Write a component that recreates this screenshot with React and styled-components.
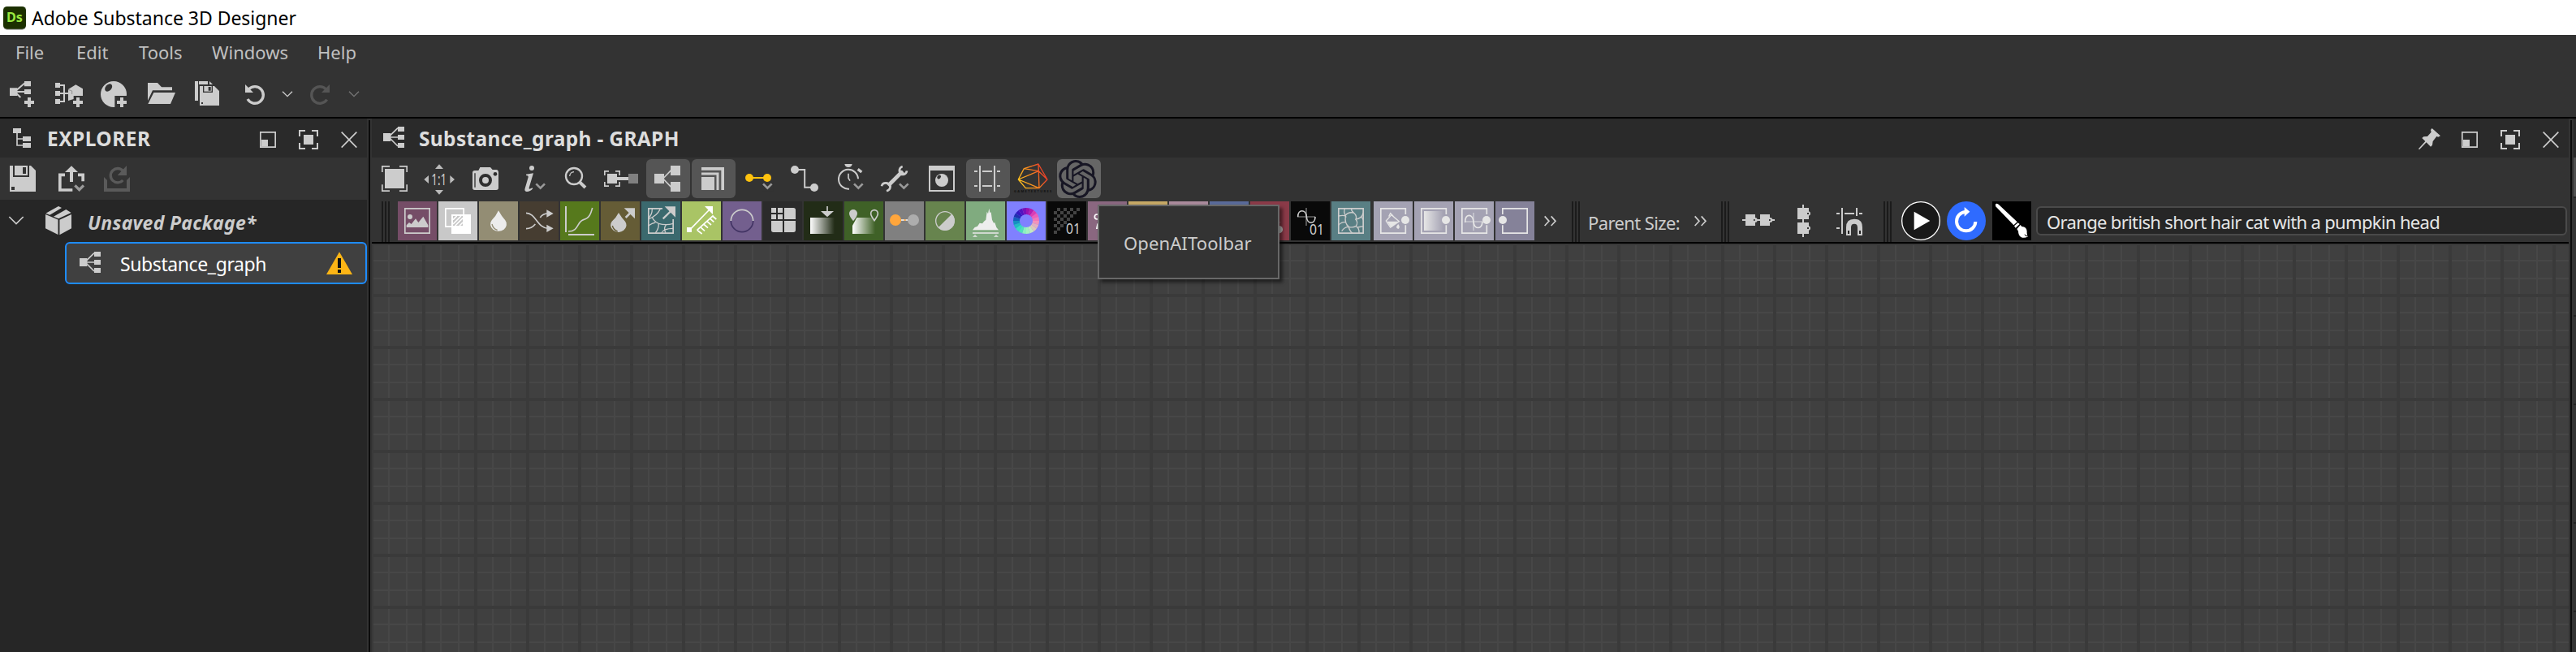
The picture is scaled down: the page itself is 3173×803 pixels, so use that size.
import React from 'react';
import styled, { createGlobalStyle } from 'styled-components';
import { SiOpenai } from 'react-icons/si';

const INK = '#cccccc';
const BG = '#333333';

const GlobalStyle = createGlobalStyle`
  * { box-sizing: border-box; }
  body { margin: 0; background: ${BG}; overflow: hidden; }
  svg { display: block; flex: none; }
`;

const Window = styled.div`
  display: flex;
  flex-direction: column;
  width: 3173px;
  height: 803px;
  overflow: hidden;
  background: ${BG};
  color: ${INK};
  font-family: 'Noto Sans', 'Open Sans', sans-serif;
  font-size: 22px;
  white-space: nowrap;
`;

const TitleBar = styled.header`
  display: flex;
  align-items: center;
  gap: 6px;
  height: 43px;
  padding-left: 4px;
  background: #ffffff;
`;

const Label = styled.span`
  padding-top: ${(p) => p.$drop || 0}px;
  font-size: ${(p) => p.$size || 22}px;
  line-height: 30px;
  font-weight: ${(p) => p.$weight || 400};
  font-style: ${(p) => (p.$italic ? 'italic' : 'normal')};
  letter-spacing: ${(p) => p.$track || 0}px;
  color: ${(p) => p.$color || INK};
`;

const MenuBar = styled.nav`
  display: flex;
  align-items: center;
  height: 42px;
  padding-left: 19px;
`;

const MenuItem = styled.div`
  width: ${(p) => p.$width}px;
  color: #c0c0c0;
  line-height: 30px;
`;

const MainToolbar = styled.div`
  display: flex;
  align-items: center;
  height: 59px;
  padding-top: 3px;
`;

const Body = styled.main`
  display: flex;
  height: 659px;
  border-top: 2px solid #000000;
`;

const Explorer = styled.aside`
  display: flex;
  flex-direction: column;
  width: 452px;
  background: #262626;
`;

const PanelHeader = styled.div`
  display: flex;
  align-items: center;
  height: 48px;
  background: #2a2a2a;
`;

const PanelTitle = styled.div`
  display: flex;
  align-items: center;
  flex: 1;
`;

const Controls = styled.div`
  display: flex;
  gap: 6px;
`;

const Toolbar = styled.div`
  display: flex;
  align-items: center;
  height: 52px;
  padding-left: ${(p) => p.$inset || 0}px;
  background: ${BG};
`;

const Splitter = styled.div`
  width: 6px;
  margin-top: 2px;
  background: #0c0c0c;
  border-left: 2px solid ${BG};
  border-right: 2px solid ${BG};
`;

const TreeRow = styled.div`
  display: flex;
  align-items: center;
  height: 52px;
`;

const SelectedRow = styled.div`
  display: flex;
  align-items: center;
  justify-content: space-between;
  height: 52px;
  margin-left: 80px;
  border: 2px solid #1e8cff;
  border-radius: 6px;
  background: #404040;
`;

const RowName = styled.div`
  display: flex;
  align-items: center;
`;

const Graph = styled.section`
  position: relative;
  display: flex;
  flex-direction: column;
  width: 2706px;
`;

const ToolButton = styled.div`
  width: 54px;
  height: 48px;
  margin-right: ${(p) => p.$after || 2}px;
  border-radius: 6px;
  overflow: hidden;
  background: ${(p) => p.$bg || 'transparent'};
`;

const LogoButton = styled(ToolButton)`
  display: flex;
  align-items: center;
  justify-content: center;
  padding-right: 3px;
`;

const NodeBar = styled.div`
  display: flex;
  align-items: flex-start;
  height: 54px;
  padding: 2px 2px 0 12px;
  border-bottom: 2px solid #000000;
  background: ${BG};
`;

const Grip = styled.div`
  width: 10px;
  height: 50px;
  margin-right: ${(p) => p.$after || 0}px;
  background: repeating-linear-gradient(90deg, #1b1b1b 0 2px, transparent 2px 4px);
`;

const Tile = styled.div`
  width: 48px;
  height: 48px;
  margin-right: ${(p) => p.$after || 2}px;
  background: ${(p) => p.$bg};
`;

const SizeLabel = styled.div`
  display: flex;
  align-items: center;
  width: 127px;
  height: 48px;
  padding-top: 3px;
`;

const RoundButton = styled.div`
  width: 48px;
  height: 48px;
  margin-right: 8px;
`;

const GripSpace = styled.div`
  width: 14px;
`;

const PromptInput = styled.div`
  flex: 1;
  display: flex;
  align-items: center;
  height: 36px;
  margin: 6px 0 0 -2px;
  padding-left: 11px;
  border: 2px solid #4a4a4a;
  border-radius: 6px;
  background: #262626;
`;

const Canvas = styled.div`
  flex: 1;
  background-color: #404040;
  background-image:
    linear-gradient(90deg, #3a3a3a 4px, transparent 4px),
    linear-gradient(180deg, #3a3a3a 4px, transparent 4px),
    linear-gradient(90deg, transparent 22px, #474747 22px 24px, transparent 24px 44px, #474747 44px 46px, transparent 46px),
    linear-gradient(180deg, transparent 22px, #474747 22px 24px, transparent 24px 44px, #474747 44px 46px, transparent 46px);
  background-size: 64px 64px;
  background-position: -2px -2px;
`;

const Tooltip = styled.div`
  position: absolute;
  left: 894px;
  top: 106px;
  width: 224px;
  height: 92px;
  display: flex;
  align-items: center;
  padding-left: 30px;
  border: 2px solid #686868;
  background: ${BG};
  box-shadow: 4px 4px 4px rgba(0, 0, 0, 0.5);
`;

const NextPanel = styled.div`
  display: flex;
  flex-direction: column;
  width: 3px;
`;

const NextPanelPart = styled.div`
  height: ${(p) => p.$h}px;
  background: ${(p) => p.$bg};
`;

/* Icons are drawn on a grid of three units per pixel. */
const Glyph = ({ x, y, w, h, children }) => (
  <svg width={w} height={h} viewBox={`${x} ${y} ${w * 3} ${h * 3}`} fill={INK} stroke="none">
    {children}
  </svg>
);

const Line = ({ d, w = 5, c = INK, ...rest }) => (
  <path d={d} fill="none" stroke={c} strokeWidth={w} {...rest} />
);

const Plus = ({ x, y }) => (
  <path d={`M${x - 6} ${y - 18}h12v12h12v12h-12v12h-12v-12h-12v-12h12z`} />
);

const Chevron = ({ x, y, c = '#999999', w = 8, r = 16 }) => (
  <Line d={`M${x - r} ${y - r / 2}l${r} ${r}l${r} ${-r}`} w={w} c={c} />
);

const GraphMark = ({ x, y }) => (
  <g transform={`translate(${x} ${y})`}>
    <path d="M0 24h28v30h-28zM54 0h24v18h-24zM54 30h24v18h-24zM54 60h24v18h-24z" />
    <Line d="M24 34L54 5M24 39H54M24 42L54 72" w={5} />
  </g>
);

const WindowControls = () => (
  <Controls>
    <Glyph x={924} y={24} w={44} h={44}>
      <Line d="M962.5 68.5h55v55h-55z" />
      <path d="M966 96h24v26h-24z" />
    </Glyph>
    <Glyph x={1074} y={24} w={44} h={44}>
      <Line d="M1107 84V63H1128M1152 63H1173V84M1173 108V129H1152M1128 129H1107V108" w={6} />
      <path d="M1122 78h36v36h-36z" />
    </Glyph>
    <Glyph x={1224} y={24} w={44} h={44}>
      <Line d="M1262 68L1318 125M1318 68L1262 125" w={5} />
    </Glyph>
  </Controls>
);

const MainIcons = () => (
  <>
    <Glyph x={0} y={276} w={56} h={48}>
      <path d="M36 325h28v29h-28zM90 300h24v19h-24zM90 330h24v18h-24z" />
      <Line d="M60 334L93 306M60 339H92M60 344L76 360" w={6} />
      <Plus x={108} y={378} />
    </Glyph>
    <Glyph x={168} y={276} w={56} h={48}>
      <path d="M204 306h18v18h-18zM204 336h18v18h-18zM204 366h18v18h-18z" />
      <Line d="M220 315H237V375H220M220 345H255" w={6} />
      <path d="M252 330L280 313L306 328V354H272V366L252 372Z" />
      <Line d="M252 331L266 336V348" w={2} c="#777" />
      <Plus x={288} y={378} />
    </Glyph>
    <Glyph x={336} y={276} w={56} h={48}>
      <circle cx="420" cy="348" r="48" />
      <path d="M424 354h50v50h-50z" fill={BG} />
      <ellipse cx="401" cy="324" rx="16" ry="11" transform="rotate(-48 401 324)" fill={BG} />
      <Plus x={450} y={378} />
    </Glyph>
    <Glyph x={504} y={276} w={56} h={48}>
      <path d="M546 306H582L597 322H636V334H564L546 372ZM568 342H648L630 384H547Z" />
    </Glyph>
    <Glyph x={672} y={276} w={56} h={48}>
      <path d="M720 300h12v72h-12zM735 300h33v12h-33zM738 318h54l18 18v54h-72z" />
      <path d="M774 300l12 12h-12z" />
      <path d="M750 318h36v24h-36z" fill={BG} />
      <path d="M754 318h28v20h-28z" />
      <path d="M770 321h9v14h-9zM744 378h6v6h-6z" fill={BG} />
    </Glyph>
    <Glyph x={840} y={276} w={56} h={48}>
      <Line d="M919 330A31 31 0 1 1 915 366" w={10} />
      <path d="M906 312V342H936Z" />
    </Glyph>
    <Glyph x={1008} y={276} w={30} h={48}>
      <Chevron x={1062} y={347} w={4} c={INK} r={18} />
    </Glyph>
    <Glyph x={1098} y={276} w={56} h={48}>
      <Line d="M1205 330A31 31 0 1 0 1208 368" w={10} c="#555555" />
      <path d="M1218 312V342H1188Z" fill="#555555" />
    </Glyph>
    <Glyph x={1266} y={276} w={30} h={48}>
      <Chevron x={1308} y={347} w={4} c="#777777" r={18} />
    </Glyph>
  </>
);

const GraphTools = () => (
  <>
    <ToolButton>
      <Glyph x={30} y={168} w={54} h={48}>
        <Line d="M62.500 216V194.500H90M126 194.500H153.500V216M153.500 262V285.500H126M90 285.500H62.500V262" />
        <path d="M72 204h72v72h-72z" />
      </Glyph>
    </ToolButton>
    <ToolButton>
      <Glyph x={198} y={168} w={54} h={48}>
        <path d="M258 204l15-17l15 17zM258 282l15 17l15-17zM234 228l-17 15l17 15zM313 228l17 15l-17 15z" fill="#bbb" />
        <text x="272" y="264" fontSize="58" textAnchor="middle" textLength="56" lengthAdjust="spacingAndGlyphs">1:1</text>
      </Glyph>
    </ToolButton>
    <ToolButton>
      <Glyph x={366} y={168} w={54} h={48}>
        <path d="M404 210H418L424 198H462L470 207H484Q492 208 492 218V274Q492 282 484 282H404Q396 282 396 274V218Q396 210 404 210Z" />
        <circle cx="444" cy="246" r="18" fill={INK} stroke="#2f2f2f" strokeWidth="12" />
        <circle cx="480" cy="223" r="7" fill="#2f2f2f" />
        <Line d="M405 220V272" w={4} c="#2f2f2f" />
      </Glyph>
    </ToolButton>
    <ToolButton>
      <Glyph x={534} y={168} w={54} h={48}>
        <circle cx="615" cy="201" r="9" />
        <path d="M594 224L621 220L605 274Q603 282 617 274L619 277Q607 290 595 288Q587 287 590 276L602 235Q603 228 594 228Z" />
        <Chevron x={647} y={267} />
      </Glyph>
    </ToolButton>
    <ToolButton>
      <Glyph x={702} y={168} w={54} h={48}>
        <circle cx="771" cy="231" r="30" fill="none" stroke={INK} strokeWidth="7" />
        <Line d="M790 251L813 273" w={12} />
        <Line d="M755 231A17 17 0 0 1 771 215" w={4} />
      </Glyph>
    </ToolButton>
    <ToolButton>
      <Glyph x={870} y={168} w={54} h={48}>
        <Line d="M884.500 228V212.500H900M924 212.500H939.500V228M939.500 252V267.500H924M900 267.500H884.500V252" />
        <path d="M894 222h36v36h-36zM930 234h42v12h-42z" />
        <path d="M972 222h36v36h-36z" fill="#808080" />
      </Glyph>
    </ToolButton>
    <ToolButton $bg="#555555">
      <Glyph x={1038} y={168} w={54} h={48}>
        <path d="M1068 222h36v36h-36zM1128 192h36v36h-36zM1128 252h36v36h-36z" />
        <Line d="M1100 240L1130 209M1100 240L1130 271" w={5} />
      </Glyph>
    </ToolButton>
    <ToolButton $bg="#555555">
      <Glyph x={1206} y={168} w={54} h={48}>
        <path d="M1242 234h48v48h-48z" />
        <Line d="M1242 222H1302V282" w={9} />
        <Line d="M1242 203.500H1320.500V282" w={11} />
      </Glyph>
    </ToolButton>
    <ToolButton>
      <Glyph x={24} y={168} w={54} h={48}>
        <circle cx="69" cy="237" r="15" fill="#ffc20e" />
        <circle cx="135" cy="237" r="15" fill="#ffc20e" />
        <path d="M69 234h66v6h-66z" fill="#ffc20e" />
        <path d="M114 249L136 266L158 249V286H114Z" fill={BG} />
        <Chevron x={136} y={267} />
      </Glyph>
    </ToolButton>
    <ToolButton>
      <Glyph x={192} y={168} w={54} h={48}>
        <circle cx="237" cy="207" r="15" />
        <circle cx="309" cy="273" r="15" />
        <Line d="M237 207H273.500V272H309" w={6} />
      </Glyph>
    </ToolButton>
    <ToolButton>
      <Glyph x={360} y={168} w={54} h={48}>
        <Line d="M438 278A36 36 0 1 1 471 241" w={6} />
        <path d="M421 186h28q-2 12-14 12t-14-12z" />
        <Line d="M470 205L484 216" w={10} />
        <Line d="M435 221V238L441 248" w={5} />
        <Chevron x={472} y={267} />
      </Glyph>
    </ToolButton>
    <ToolButton>
      <Glyph x={528} y={168} w={54} h={48}>
        <Line d="M584 264L630 218" w={14} />
        <Line d="M635 195Q622 200 624 214T641 224Q650 220 651 211M558 268Q560 256 573 256T590 268Q590 282 576 286" w={8} />
        <path d="M620 208l8 18l18-2l-12-14zM570 254l20 20l-2-18z" />
        <Chevron x={640} y={267} />
      </Glyph>
    </ToolButton>
    <ToolButton $after={4}>
      <Glyph x={696} y={168} w={54} h={48}>
        <Line d="M735 195h90v90h-90z" w={6} />
        <path d="M732 192h96v18h-96z" />
        <circle cx="780" cy="246" r="24" />
        <ellipse cx="770" cy="234" rx="8" ry="6" transform="rotate(-45 770 234)" fill={BG} />
      </Glyph>
    </ToolButton>
    <ToolButton $bg="#555555">
      <Glyph x={870} y={168} w={54} h={48}>
        <Line d="M921 192V288M975 192V288" w={6} />
        <Line d="M900 213H912M930 213H966M984 213H996M900 267H912M930 267H966M984 267H996" w={6} />
      </Glyph>
    </ToolButton>
    <ToolButton>
      <Glyph x={1038} y={168} w={54} h={48}>
        <defs>
          <linearGradient id="gt" gradientUnits="userSpaceOnUse" x1="1063" y1="260" x2="1165" y2="215">
            <stop offset="0" stopColor="#ffc81e" />
            <stop offset="0.550" stopColor="#f58220" />
            <stop offset="1" stopColor="#e8342a" />
          </linearGradient>
        </defs>
        <path
          d="M1084 203L1137 186L1170 243L1140 275H1090L1063 243ZM1084 203L1138 212L1170 243M1137 186L1138 212L1140 275L1063 243L1138 212"
          fill="none"
          stroke="url(#gt)"
          strokeWidth="4"
          strokeLinejoin="round"
        />
        <text x="1047" y="291" fontSize="12" fontWeight="700" fill="#111111" textLength="139">GAMETEXTURES</text>
      </Glyph>
    </ToolButton>
    <LogoButton $bg="#666666">
      <SiOpenai size={47} color="#171624" />
    </LogoButton>
  </>
);

const WHEEL = [
  '#9a12b0', '#b81cb0', '#dc3cb4', '#f05cb8', '#f278ba', '#f094bc', '#e4b0c0', '#dcc8bc', '#c4e8c0', '#a4f0c0',
  '#8cf0c0', '#50e0bc', '#34dcc4', '#20bcc0', '#1490c0', '#1460bc', '#2030b0', '#3418c0', '#5412c0', '#7810b8',
];

const polar = (cx, cy, r, deg) => {
  const a = ((deg - 90) * Math.PI) / 180;
  return `${(cx + r * Math.cos(a)).toFixed(1)} ${(cy + r * Math.sin(a)).toFixed(1)}`;
};

const ColorWheel = () =>
  WHEEL.map((color, i) => {
    const a = i * 18;
    return (
      <path
        key={color}
        fill={color}
        d={`M${polar(1092, 396, 48, a)}A48 48 0 0 1 ${polar(1092, 396, 48, a + 18)}L${polar(1092, 396, 24, a + 18)}A24 24 0 0 0 ${polar(1092, 396, 24, a)}Z`}
      />
    );
  });

/* Filled columns of each row of the checkerboard triangle. */
const CHECKS = [[1, 3, 5, 7], [0, 2, 4, 6], [1, 3, 5], [0, 2, 4], [1, 3], [0, 2], [1], [0]];

const NodeTiles = () => (
  <>
    <Tile $bg="#754d67">
      <Glyph x={120} y={324} w={48} h={48}>
        <Line d="M146.500 350.500h91v91h-91z" />
        <circle cx="165" cy="381" r="9" />
        <path d="M152 420V412L162 402L170 408L186 388L196 402L214 380L232 412V420Z" />
      </Glyph>
    </Tile>
    <Tile $bg="#c8c8c8">
      <Glyph x={270} y={324} w={48} h={48}>
        <Line d="M296.500 350.500h67v67h-67z" c="#ffffff" />
        <path d="M318 372h72v72h-72z" fill="#ffffff" />
        <path d="M324 378h36v36h-36z" fill="#c8c8c8" />
        <Line d="M324 392L338 378M324 408L354 378M332 414L360 386M348 414L360 402" w={5} c="#ffffff" />
      </Glyph>
    </Tile>
    <Tile $bg="#938d74">
      <Glyph x={420} y={324} w={48} h={48}>
        <path d="M492 358Q504 380 517 394A30 26 0 1 1 467 394Q482 380 492 358Z" fill="#ececec" />
        <Line d="M468 408Q472 426 488 430" w={4} c="#938d74" />
      </Glyph>
    </Tile>
    <Tile $bg="#463d31">
      <Glyph x={570} y={324} w={48} h={48}>
        <Line d="M594 367C630 367 636 424 676 424M594 425C612 425 620 418 628 408M646 384C652 374 660 369 676 369" />
        <path d="M670 355l25 14l-25 14zM670 410l25 14l-25 14z" />
      </Glyph>
    </Tile>
    <Tile $bg="#56791c">
      <Glyph x={720} y={324} w={48} h={48}>
        <Line d="M741 342V438M750 447H846" w={6} />
        <Line d="M750 435C790 435 780 400 806 392C830 386 834 366 839 348" />
      </Glyph>
    </Tile>
    <Tile $bg="#655c36">
      <Glyph x={870} y={324} w={48} h={48}>
        <path d="M936 366Q948 386 960 398A29 26 0 1 1 911 398Q926 386 936 366Z" />
        <Line d="M913 414Q917 430 932 435" w={4} c="#655c36" />
        <path d="M956 349H996V388Z" />
        <Line d="M962 384L984 362" w={8} />
      </Glyph>
    </Tile>
    <Tile $bg="#3b696e">
      <Glyph x={1020} y={324} w={48} h={48}>
        <Line d="M1098 350.500H1046.500V441.500H1137.500V390" />
        <Line d="M1060 352Q1060 374 1046 386M1046 390Q1078 378 1090 352M1060 382Q1064 396 1084 406Q1110 414 1138 406M1046 414Q1060 404 1072 402M1084 406Q1084 428 1072 440M1138 424Q1100 424 1094 442M1112 410Q1100 424 1110 440" w={4} />
        <path d="M1106 343H1146V383Z" />
        <Line d="M1100 388L1132 357" w={7} />
      </Glyph>
    </Tile>
    <Tile $bg="#a9c465">
      <Glyph x={1170} y={324} w={48} h={48}>
        <path d="M1188 420h18v18h-18zM1254 342H1284V372Z" fill="#ffffff" />
        <Line d="M1198 430L1272 354" w={5} c="#ffffff" />
        <Line d="M1226 430L1286 376M1226 430L1244 444M1238 419L1254 433M1250 408L1266 422M1262 397L1278 411M1273 387L1288 400M1283 378L1297 390" w={5} c="#ffffff" />
      </Glyph>
    </Tile>
    <Tile $bg="#735f8e">
      <Glyph x={-30} y={324} w={48} h={48}>
        <Line d="M1 396A41 41 0 0 1 83 396" w={5} />
        <Line d="M1 396A41 41 0 0 0 83 396" w={5} c="#423464" />
      </Glyph>
    </Tile>
    <Tile $bg="#2b2b2b">
      <Glyph x={120} y={324} w={48} h={48}>
        <path d="M150 348h18v18h-18zM174 348h18v18h-18zM150 372h18v18h-18zM174 372h18v18h-18zM198 348h34q8 0 8 8v34h-42zM150 396h42v42h-34q-8 0-8-8zM198 396h42v34q0 8-8 8h-34z" />
      </Glyph>
    </Tile>
    <Tile $bg="#222c17">
      <Glyph x={270} y={324} w={48} h={48}>
        <defs>
          <linearGradient id="fade">
            <stop offset="0" stopColor="#ffffff" />
            <stop offset="1" stopColor="#ffffff" stopOpacity="0" />
          </linearGradient>
        </defs>
        <path d="M294 384h90v60h-90z" fill="url(#fade)" />
        <path d="M333 360H381L357 382Z" />
        <Line d="M357 342V366" w={5} />
      </Glyph>
    </Tile>
    <Tile $bg="#3f6127">
      <Glyph x={420} y={324} w={48} h={48}>
        <path d="M450 444V414L466 384H534V444Z" fill="url(#fade)" />
        <path d="M453 354a15 15 0 0 1 15 15q0 10-15 28q-15-18-15-28a15 15 0 0 1 15-15z" />
        <Line d="M531 356a13 13 0 0 1 13 13q0 8-13 26q-13-18-13-26a13 13 0 0 1 13-13z" />
      </Glyph>
    </Tile>
    <Tile $bg="#808080">
      <Glyph x={570} y={324} w={48} h={48}>
        <circle cx="609" cy="393" r="21" fill="#ffa63c" />
        <circle cx="675" cy="393" r="21" fill="#adadad" />
        <path d="M630 390h24v6h-24z" fill="#dddddd" />
        <path d="M641 390h6v6h-6z" fill="#ffa63c" />
      </Glyph>
    </Tile>
    <Tile $bg="#67844e">
      <Glyph x={720} y={324} w={48} h={48}>
        <circle cx="792" cy="396" r="34" fill="none" stroke={INK} strokeWidth="4" />
        <path d="M817 371A35 35 0 0 1 767 421Z" />
      </Glyph>
    </Tile>
    <Tile $bg="#80ab7f">
      <Glyph x={870} y={324} w={48} h={48}>
        <path d="M894 430L902 420L912 416L920 404L930 406L936 398L943 392L947 362L951 370L955 350L958 366L962 364L966 392L972 404L976 402L982 420L990 430Z" fill="#eeeeee" />
        <path d="M894 438h96v6h-96zM894 456l9-10l9 10zM972 456l9-10l9 10z" fill="#cfd8cf" />
      </Glyph>
    </Tile>
    <Tile $bg="#8080ff">
      <Glyph x={1020} y={324} w={48} h={48}>
        <ColorWheel />
      </Glyph>
    </Tile>
    <Tile $bg="#090909">
      <Glyph x={1170} y={324} w={48} h={48}>
        {CHECKS.map((row, r) =>
          row.map((c) => (
            <rect key={`${r}-${c}`} x={1194 + c * 12} y={348 + r * 12} width="12" height="12" fill="#444444" />
          ))
        )}
        <text x="1239" y="445" fontSize="52" textLength="54" lengthAdjust="spacingAndGlyphs">01</text>
      </Glyph>
    </Tile>
    <Tile $bg="#8a6780">
      <Glyph x={0} y={204} w={48} h={48}>
        <circle cx="34" cy="261" r="9" fill="none" stroke="#ffffff" strokeWidth="5" />
        <path d="M30 306L34 286H50V306Z" fill="#ffffff" />
      </Glyph>
    </Tile>
    <Tile $bg="#c5a865" />
    <Tile $bg="#a98a9b" />
    <Tile $bg="#596a99" />
    <Tile $bg="#8b3a48">
      <Glyph x={600} y={204} w={48} h={48}>
        <circle cx="706" cy="308" r="14" />
        <path d="M696 280h16v3h-16z" fill="#aa7780" />
      </Glyph>
    </Tile>
    <Tile $bg="#090909">
      <Glyph x={90} y={54} w={48} h={48}>
        <Line d="M147 78V144M114 111H180" w={5} c="#666666" />
        <Line d="M116 111C116 82 146 82 148 111S180 140 180 111" />
        <text x="159" y="177" fontSize="52" textLength="54" lengthAdjust="spacingAndGlyphs">01</text>
      </Glyph>
    </Tile>
    <Tile $bg="#597f84" $after={4}>
      <Glyph x={240} y={54} w={48} h={48}>
        <Line d="M266.500 80.500h91v91h-91z" />
        <Line d="M266 108Q284 104 292 108Q284 92 290 80M290 108Q300 92 322 96Q312 88 314 80M322 96Q336 108 330 120Q352 118 358 96M350 112Q358 118 358 124M330 120Q340 134 330 146Q344 152 342 172M336 150L358 146M330 146Q320 152 304 148Q306 162 318 172M304 148Q288 136 292 108M304 148Q288 148 278 164M292 130Q276 130 266 142" w={4} />
      </Glyph>
    </Tile>
    <Tile $bg="#a4a2b3">
      <Glyph x={396} y={54} w={48} h={48}>
        <Line d="M514 102V80.500H422.500V171.500H514V142" c="#e6e6e6" />
        <circle cx="513" cy="123" r="15" fill="#e6e6e6" />
        <path d="M442 126L462 104L490 128L458 150Z" fill="none" stroke="#e6e6e6" strokeWidth="4" />
        <path d="M446 128H486L460 150ZM487 138q9 12 0 18q-14-4 0-18z" fill="#e6e6e6" />
        <Line d="M452 110L458 98L468 108" w={4} c="#e6e6e6" />
      </Glyph>
    </Tile>
    <Tile $bg="#a4a2b3">
      <Glyph x={546} y={54} w={48} h={48}>
        <defs>
          <linearGradient id="soft">
            <stop offset="0" stopColor="#e6e6e6" />
            <stop offset="1" stopColor="#a4a2b3" />
          </linearGradient>
        </defs>
        <Line d="M664 102V80.500H572.500V171.500H664V142" c="#e6e6e6" />
        <path d="M582 90h72v72h-72z" fill="url(#soft)" />
        <circle cx="663" cy="123" r="15" fill="#e6e6e6" />
      </Glyph>
    </Tile>
    <Tile $bg="#a4a2b3">
      <Glyph x={696} y={54} w={48} h={48}>
        <Line d="M814 102V80.500H722.500V171.500H814V142" c="#e6e6e6" />
        <Line d="M765 96V162M732 129H798" c="#c8c8d0" />
        <Line d="M734 132C734 98 762 98 765 129S796 158 798 129" c="#e6e6e6" />
        <circle cx="813" cy="123" r="15" fill="#e6e6e6" />
      </Glyph>
    </Tile>
    <Tile $bg="#858299">
      <Glyph x={846} y={54} w={48} h={48}>
        <Line d="M872.500 102V80.500H963.500V171.500H872.500V142" c="#e6e6e6" />
        <circle cx="873" cy="123" r="15" fill="#e6e6e6" />
      </Glyph>
    </Tile>
  </>
);

const More = () => <Line d="M8 109L24 127L8 144M32 109L48 127L32 144" w={5} />;

const LayoutTools = () => (
  <>
    <Glyph x={714} y={54} w={56} h={48}>
      <path d="M750 102h36v42h-36zM804 102h36v42h-36zM738 120h120v6h-120z" />
      <circle cx="785" cy="123" r="9" />
      <circle cx="841" cy="123" r="9" />
      <path d="M780 120h5v6h-5zM837 120h5v6h-5z" fill={BG} />
    </Glyph>
    <Glyph x={882} y={54} w={56} h={48}>
      <path d="M942 78h42v42h-42zM942 132h42v42h-42zM960 66h6v120h-6z" />
      <circle cx="982" cy="99" r="8" />
      <circle cx="982" cy="153" r="8" />
      <path d="M978 96h6v6h-6zM978 150h6v6h-6z" fill={BG} />
    </Glyph>
    <Glyph x={1050} y={54} w={56} h={48}>
      <path d="M1104 78h6v96h-6zM1158 78h6v30h-6zM1086 96h12v6h-12zM1116 96h36v6h-36zM1170 96h12v6h-12zM1086 150h12v6h-12z" />
      <Line d="M1131 180V150Q1131 128 1152 128T1173 150V180" w={18} />
      <path d="M1128 162h6v12h-6zM1170 162h6v12h-6z" fill="#222222" />
    </Glyph>
  </>
);

export default function App() {
  return (
    <Window>
      <GlobalStyle />
      <TitleBar>
        <Glyph x={12} y={15} w={29} h={30}>
          <rect x="12" y="20" width="84" height="84" rx="14" fill="#999999" />
          <rect x="12" y="18" width="84" height="83" rx="14" fill="#1c3000" />
          <text x="24" y="75" fontSize="46" fontWeight="700" fill="#99e83f" textLength="60" lengthAdjust="spacingAndGlyphs">Ds</text>
        </Glyph>
        <Label $color="#000000" $size={23} $track={-0.03}>Adobe Substance 3D Designer</Label>
      </TitleBar>
      <MenuBar>
        <MenuItem $width={75}>File</MenuItem>
        <MenuItem $width={77}>Edit</MenuItem>
        <MenuItem $width={90}>Tools</MenuItem>
        <MenuItem $width={130}>Windows</MenuItem>
        <MenuItem $width={60}>Help</MenuItem>
      </MenuBar>
      <MainToolbar>
        <MainIcons />
      </MainToolbar>
      <Body>
        <Explorer>
          <PanelHeader>
            <PanelTitle>
              <Glyph x={0} y={24} w={58} h={44}>
                <path d="M48 54h30v18h-30zM84 84h30v18h-30zM84 108h30v18h-30z" />
                <Line d="M63 70V117H86M63 93H86" />
              </Glyph>
              <Label $weight={700} $size={24.5} $track={0.45} $drop={2} $color="#dddddd">EXPLORER</Label>
            </PanelTitle>
            <WindowControls />
          </PanelHeader>
          <Toolbar>
            <Glyph x={0} y={168} w={56} h={48}>
              <path d="M36 192H114L132 210V288H36Z" />
              <path d="M48 192h60v42h-60zM42 270h12v12h-12z" fill={BG} />
              <path d="M54 192h48v36h-48z" />
              <path d="M84 198h12v24h-12z" fill={BG} />
            </Glyph>
            <Glyph x={168} y={168} w={56} h={48}>
              <path d="M264 193L288 216H240ZM258 214h12v38h-12z" />
              <Line d="M240 226H221.500V282H268M288 226H306.500V250" w={11} />
              <Chevron x={293} y={273} w={10} />
            </Glyph>
            <Glyph x={336} y={168} w={56} h={48}>
              <path d="M384 234L396 246V276H468V246L480 234V288H384Z" fill="#5a5a5a" />
              <Line d="M454 211A26 26 0 1 0 454 246" w={10} c="#5a5a5a" />
              <path d="M468 192V228H434Z" fill="#5a5a5a" />
            </Glyph>
          </Toolbar>
          <TreeRow>
            <Glyph x={0} y={324} w={108} h={48}>
              <Chevron x={60} y={394} w={5} c={INK} r={26} />
              <path d="M168 372L216 392V448L168 424ZM264 372L220 392V448L264 424Z" />
              <path d="M169 368L216 342L228 348L184 374ZM198 380L244 354L263 366L216 388Z" />
              <Line d="M217 388V450" w={5} c="#262626" />
            </Glyph>
            <Label $weight={700} $italic $size={23} $track={0.3} $drop={3}>Unsaved Package*</Label>
          </TreeRow>
          <SelectedRow>
            <RowName>
              <Glyph x={246} y={480} w={66} h={48}>
                <GraphMark x={294} y={510} />
              </Glyph>
              <Label $color="#ffffff" $size={23} $track={-0.4} $drop={2}>Substance_graph</Label>
            </RowName>
            <Glyph x={1194} y={480} w={52} h={48}>
              <path d="M1254 511L1302 594H1206Z" fill="#fdb515" />
              <path d="M1248 534h12v36h-12zM1248 576h12v12h-12z" fill="#111111" />
            </Glyph>
          </SelectedRow>
        </Explorer>
        <Splitter />
        <Graph>
          <PanelHeader>
            <PanelTitle>
              <Glyph x={24} y={24} w={58} h={44}>
                <GraphMark x={66} y={48} />
              </Glyph>
              <Label $weight={700} $size={24.5} $track={0.33} $drop={2} $color="#dddddd">Substance_graph - GRAPH</Label>
            </PanelTitle>
            <Glyph x={330} y={24} w={50} h={44}>
              <path d="M407 54L438 82L430 86L424 84L410 102L408 116L402 122L386 106L360 133L357 130L382 102L370 90L376 85L390 84L404 68L402 60Z" />
            </Glyph>
            <WindowControls />
          </PanelHeader>
          <Toolbar $inset={2}>
            <GraphTools />
          </Toolbar>
          <NodeBar>
            <Grip $after={10} />
            <NodeTiles />
            <Glyph x={-24} y={54} w={44} h={48}>
              <More />
            </Glyph>
            <Grip $after={10} />
            <SizeLabel>
              <Label $track={-0.6}>Parent Size:</Label>
            </SizeLabel>
            <Glyph x={-6} y={54} w={37} h={48}>
              <More />
            </Glyph>
            <Grip $after={8} />
            <LayoutTools />
            <GripSpace />
            <Grip $after={12} />
            <RoundButton>
              <Glyph x={126} y={54} w={48} h={48}>
                <circle cx="198" cy="126" r="70" fill="#191919" stroke="#ffffff" strokeWidth="4" />
                <path d="M173 92L232 126L173 160Z" fill="#ffffff" />
              </Glyph>
            </RoundButton>
            <RoundButton>
              <Glyph x={294} y={54} w={48} h={48}>
                <circle cx="366" cy="126" r="72" fill="#2f6bff" />
                <Line d="M400 129A35 35 0 1 1 362 93" w={12} c="#ffffff" />
                <path d="M359 75L379 92L359 110Z" fill="#ffffff" />
              </Glyph>
            </RoundButton>
            <RoundButton>
              <Glyph x={462} y={54} w={48} h={48}>
                <path d="M462 54h144v144h-144z" fill="#000000" />
                <path d="M474 64Q478 60 486 66L554 130L541 142L474 72ZM557 133L563 138L548 152L543 145ZM566 141L571 147Q590 148 590 166Q589 180 594 184Q580 192 568 186Q558 178 558 164L553 156Z" fill="#ffffff" />
                <Line d="M582 176Q584 184 592 182" w={3} c="#000000" />
              </Glyph>
            </RoundButton>
            <PromptInput>
              <Label $color="#e6e6e6" $track={-0.66} $drop={2}>Orange british short hair cat with a pumpkin head</Label>
            </PromptInput>
          </NodeBar>
          <Canvas />
          <Tooltip>
            <Label $track={0.12} $drop={2}>OpenAIToolbar</Label>
          </Tooltip>
        </Graph>
        <Splitter />
        <NextPanel>
          <NextPanelPart $h={48} $bg="#2a2a2a" />
          <NextPanelPart $h={48} $bg="#505050" />
          <NextPanelPart $h={2} $bg="#262626" />
          <NextPanelPart $h={144} $bg="#333333" />
          <NextPanelPart $h={2} $bg="#222222" />
          <NextPanelPart $h={107} $bg="#333333" />
          <NextPanelPart $h={2} $bg="#222222" />
          <NextPanelPart $h={144} $bg="#333333" />
          <NextPanelPart $h={2} $bg="#222222" />
          <NextPanelPart $h={107} $bg="#333333" />
          <NextPanelPart $h={2} $bg="#222222" />
        </NextPanel>
      </Body>
    </Window>
  );
}
